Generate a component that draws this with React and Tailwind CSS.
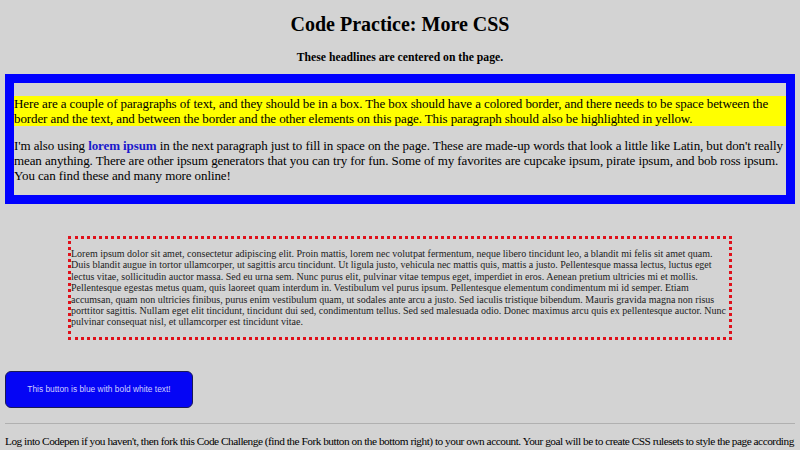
import React from "react";

const serif = "font-['Liberation_Serif','Times_New_Roman',serif]";

export default function App() {
  return (
    <div className={`min-h-[450px] bg-[#d3d3d3] px-[5px] text-black ${serif}`}>
      <h1 className="pt-[12px] text-center text-[20px] font-bold leading-[24px]">
        Code Practice: More CSS
      </h1>
      <h3 className="mt-[15px] text-center text-[11.7px] font-bold leading-[14px]">
        These headlines are centered on the page.
      </h3>

      <div className="mt-[9px] border-[9px] border-[#0000ff] text-[13px] leading-[15px] tracking-[-0.1px]">
        <p className="mt-[13px] bg-[#ffff00]">
          Here are a couple of paragraphs of text, and they should be in a box. The box
          should have a colored border, and there needs to be space between the border and
          the text, and between the border and the other elements on this page. This
          paragraph should also be highlighted in yellow.
        </p>
        <p className="mb-[12px] mt-[12px]">
          I'm also using <strong className="text-[#1a1acc]">lorem ipsum</strong> in the next
          paragraph just to fill in space on the page. These are made-up words that look a
          little like Latin, but don't really mean anything. There are other ipsum generators
          that you can try for fun. Some of my favorites are cupcake ipsum, pirate ipsum, and
          bob ross ipsum. You can find these and many more online!
        </p>
      </div>

      <div className="mx-auto mt-[32px] w-[664px] border-[3px] border-dotted border-[#e0101a] pb-[9px] pt-[9px] text-[10px] leading-[11.4px] text-[#222]">
        <p>
          Lorem ipsum dolor sit amet, consectetur adipiscing elit. Proin mattis, lorem nec
          volutpat fermentum, neque libero tincidunt leo, a blandit mi felis sit amet quam.
          Duis blandit augue in tortor ullamcorper, ut sagittis arcu tincidunt. Ut ligula
          justo, vehicula nec mattis quis, mattis a justo. Pellentesque massa lectus, luctus
          eget lectus vitae, sollicitudin auctor massa. Sed eu urna sem. Nunc purus elit,
          pulvinar vitae tempus eget, imperdiet in eros. Aenean pretium ultricies mi et
          mollis. Pellentesque egestas metus quam, quis laoreet quam interdum in. Vestibulum
          vel purus ipsum. Pellentesque elementum condimentum mi id semper. Etiam accumsan,
          quam non ultricies finibus, purus enim vestibulum quam, ut sodales ante arcu a
          justo. Sed iaculis tristique bibendum. Mauris gravida magna non risus porttitor
          sagittis. Nullam eget elit tincidunt, tincidunt dui sed, condimentum tellus. Sed sed
          malesuada odio. Donec maximus arcu quis ex pellentesque auctor. Nunc pulvinar
          consequat nisl, et ullamcorper est tincidunt vitae.
        </p>
      </div>

      <button className="mt-[31px] flex h-[37px] w-[188px] items-center justify-center rounded-[6px] border border-[#1a1a55] bg-[#0505f5] font-['Liberation_Sans',Arial,sans-serif] text-[8.4px] text-[#d0d0ff]">
        This button is blue with bold white text!
      </button>

      <hr className="mt-[15px] border-t border-[#b0b0b0]" />

      <p className="mt-[10px] text-[11.3px] leading-[14px] tracking-[-0.48px]">
        Log into Codepen if you haven't, then fork this Code Challenge (find the Fork button
        on the bottom right) to your own account. Your goal will be to create CSS rulesets to
        style the page according to the rules below.{" "}
        <strong>Do not modify the HTML code for this challenge, only the CSS.</strong>
      </p>
    </div>
  );
}
